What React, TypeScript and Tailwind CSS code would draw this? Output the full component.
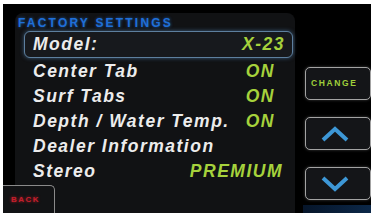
import React from 'react';

const rows = [
  { label: 'Center Tab', value: 'ON', pr: 'pr-[20px]' },
  { label: 'Surf Tabs', value: 'ON', pr: 'pr-[20px]' },
  { label: 'Depth / Water Temp.', value: 'ON', pr: 'pr-[20px]' },
  { label: 'Dealer Information', value: '', pr: 'pr-[20px]' },
  { label: 'Stereo', value: 'PREMIUM', pr: 'pr-[12px]' },
];

function SideButton({ children }: { children: React.ReactNode }) {
  return (
    <div className="w-[66px] h-[33px] rounded-[5px] border-[1.5px] border-[#a3a3a3] bg-[#141518] flex items-center pl-[5px] shadow-[0_0_3px_rgba(255,255,255,0.25)]">
      {children}
    </div>
  );
}

export default function App() {
  return (
    <div className="w-[373px] h-[215px] bg-white pt-[4px] pl-[3px] pr-[2px] pb-[2px] font-['Liberation_Sans',Arial,sans-serif]">
      <div className="relative w-full h-full bg-black overflow-hidden flex items-start">
        {/* settings panel */}
        <div className="ml-[12px] mt-[9px] w-[287px] self-stretch rounded-t-[8px] bg-[#111214] flex flex-col">
          <div className="pl-[3px] pt-[5px] h-[15px] text-[12px] leading-[11px] font-bold tracking-[2.2px] text-[#1f6fd8] [text-shadow:0_0_3px_rgba(40,120,230,0.7)]">
            FACTORY SETTINGS
          </div>
          <div className="ml-[9px] mt-[3px] w-[269px] h-[27px] rounded-[6px] border-[1.5px] border-[#5d7f9e] bg-[#17191d] shadow-[0_0_4px_rgba(90,140,190,0.6)] flex items-center justify-between pl-[8px] pr-[7px] italic font-bold text-[17.5px] tracking-[1.5px]">
            <span className="text-[#ececec]">Model:</span>
            <span className="text-[#a6d23c]">X-23</span>
          </div>
          <div className="mt-[1px] flex flex-col">
            {rows.map((r) => (
              <div
                key={r.label}
                className={`h-[25px] flex items-center justify-between pl-[18px] ${r.pr} italic font-bold text-[17.5px] tracking-[1.5px]`}
              >
                <span className="text-[#ececec]">{r.label}</span>
                <span className="text-[#a6d23c]">{r.value}</span>
              </div>
            ))}
          </div>
        </div>

        {/* right buttons */}
        <div className="ml-[10px] mt-[63px] flex flex-col gap-[17px]">
          <SideButton>
            <span className="text-[8.5px] font-bold tracking-[1.6px] text-[#9fcf3a]">CHANGE</span>
          </SideButton>
          <SideButton>
            <svg width="50" height="24" viewBox="0 0 50 24">
              <path d="M12 18 L24 7 L36 18" fill="none" stroke="#3d97d6" strokeWidth="4" strokeLinejoin="miter" />
            </svg>
          </SideButton>
          <SideButton>
            <svg width="50" height="24" viewBox="0 0 50 24">
              <path d="M12 6 L24 17 L36 6" fill="none" stroke="#3d97d6" strokeWidth="4" strokeLinejoin="miter" />
            </svg>
          </SideButton>
        </div>

        <div className="absolute right-0 bottom-0 w-[68px] h-[8px] bg-gradient-to-r from-[#06152a] to-[#0c2848]" />

        {/* back button */}
        <div className="absolute left-0 bottom-0 w-[52px] h-[28px] rounded-tr-[5px] border-t-[1.5px] border-r-[1.5px] border-[#8a8a8a] bg-[#121315] flex items-center pl-[8px]">
          <span className="text-[8px] font-bold tracking-[1.5px] text-[#c41f2c] [text-shadow:0_0_3px_rgba(220,30,40,0.8)]">BACK</span>
        </div>
      </div>
    </div>
  );
}
